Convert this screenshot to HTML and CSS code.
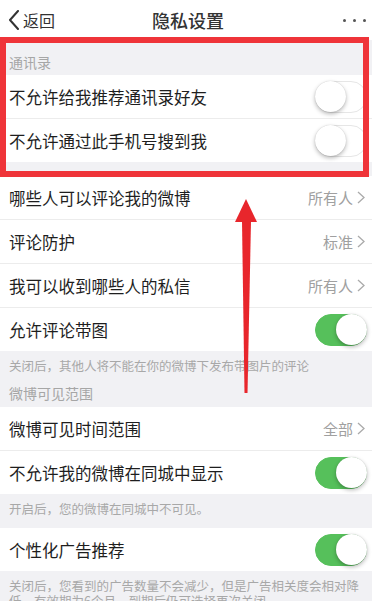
FILE: index.html
```html
<!DOCTYPE html>
<html lang="zh-CN">
<head>
<meta charset="utf-8">
<title>隐私设置</title>
<link rel="stylesheet" href="styles.css">
</head>
<body>
<div class="screen">
  <header class="nav">
    <div class="back">
      <svg class="back-icon" width="12" height="20" viewBox="0 0 12 20"><polyline points="10,1 2,10 10,19" fill="none" stroke="#333" stroke-width="2" stroke-linejoin="round" stroke-linecap="round"/></svg>
      <span>返回</span>
    </div>
    <div class="title">隐私设置</div>
    <div class="more"><i></i><i></i><i></i></div>
  </header>

  <div class="group-head">通讯录</div>
  <div class="list">
    <div class="row"><span class="label">不允许给我推荐通讯录好友</span><span class="switch"></span></div>
    <div class="row"><span class="label">不允许通过此手机号搜到我</span><span class="switch"></span></div>
  </div>
  <div class="gap"></div>
  <div class="list">
    <div class="row"><span class="label">哪些人可以评论我的微博</span><span class="value">所有人<svg class="chev" width="8" height="13" viewBox="0 0 8 13"><polyline points="1,1 7,6.5 1,12" fill="none" stroke="#aaa" stroke-width="1.3"/></svg></span></div>
    <div class="row"><span class="label">评论防护</span><span class="value">标准<svg class="chev" width="8" height="13" viewBox="0 0 8 13"><polyline points="1,1 7,6.5 1,12" fill="none" stroke="#aaa" stroke-width="1.3"/></svg></span></div>
    <div class="row"><span class="label">我可以收到哪些人的私信</span><span class="value">所有人<svg class="chev" width="8" height="13" viewBox="0 0 8 13"><polyline points="1,1 7,6.5 1,12" fill="none" stroke="#aaa" stroke-width="1.3"/></svg></span></div>
    <div class="row"><span class="label">允许评论带图</span><span class="switch on"></span></div>
  </div>
  <div class="note">关闭后，其他人将不能在你的微博下发布带图片的评论</div>
  <div class="group-head small">微博可见范围</div>
  <div class="list">
    <div class="row"><span class="label">微博可见时间范围</span><span class="value">全部<svg class="chev" width="8" height="13" viewBox="0 0 8 13"><polyline points="1,1 7,6.5 1,12" fill="none" stroke="#aaa" stroke-width="1.3"/></svg></span></div>
    <div class="row"><span class="label">不允许我的微博在同城中显示</span><span class="switch on"></span></div>
  </div>
  <div class="note tall">开启后，您的微博在同城中不可见。</div>
  <div class="list">
    <div class="row"><span class="label">个性化广告推荐</span><span class="switch on"></span></div>
  </div>
  <div class="note">关闭后，您看到的广告数量不会减少，但是广告相关度会相对降低，有效期为6个月，到期后仍可选择再次关闭。</div>

  <div class="annot-box"></div>
  <svg class="annot-arrow" width="372" height="601" viewBox="0 0 372 601">
    <polygon points="246,199 235,222 257,222" fill="#e8262c"/>
    <polygon points="242,221 251,221 247.5,393 244.5,393" fill="#e8262c"/>
  </svg>
</div>
</body>
</html>
```

FILE: styles.css
```css
* { box-sizing: border-box; margin: 0; padding: 0; }
html, body { width: 372px; height: 601px; overflow: hidden; }
body {
  background: #f1f1f4;
  font-family: "Noto Sans CJK SC", "Noto Sans", sans-serif;
  color: #222;
}
.screen { position: relative; width: 372px; height: 601px; overflow: hidden; }

.nav {
  height: 40px;
  background: #fff;
  display: flex;
  align-items: center;
  justify-content: space-between;
  padding: 0 4px 0 8px;
}
.back { display: flex; align-items: center; gap: 3px; font-size: 16px; color: #333; width: 80px; }
.back-icon { display: block; }
.title { font-size: 18px; font-weight: 500; color: #333; }
.more { width: 80px; display: flex; justify-content: flex-end; gap: 7px; padding-right: 2px; }
.more i { display: block; width: 3px; height: 3px; border-radius: 50%; background: #555; }

.group-head {
  height: 35px;
  padding: 15px 9px 0;
  font-size: 14px;
  line-height: 14px;
  color: #a6a6a6;
}
.group-head.small { height: 27px; padding-top: 6px; }

.list { background: #fff; }
.row {
  height: 44px;
  display: flex;
  align-items: center;
  justify-content: space-between;
  padding: 0 5px 0 9px;
  border-bottom: 1px solid #ececec;
}
.row:last-child { border-bottom: none; height: 43px; }
.label { font-size: 16.5px; line-height: 20px; color: #1e1e1e; }
.value { display: flex; align-items: center; gap: 4px; font-size: 15px; color: #a0a0a0; padding-right: 2px; }
.chev { display: block; }

.switch {
  position: relative;
  width: 52px;
  height: 32px;
  border-radius: 16px;
  background: #fff;
  border: 1.5px solid #e6e6e6;
  flex: none;
}
.switch::after {
  content: "";
  position: absolute;
  top: -1px;
  left: -1px;
  width: 31px;
  height: 31px;
  border-radius: 50%;
  background: #fff;
  box-shadow: 0 2px 4px rgba(0,0,0,0.28), 0 0 1px rgba(0,0,0,0.2);
}
.switch.on { background: #56c05b; border-color: #56c05b; }
.switch.on::after { left: auto; right: -1px; }

.gap { height: 14px; }

.note {
  padding: 7px 9px 7px;
  font-size: 12.5px;
  line-height: 15px;
  color: #a8a8a8;
}
.note.tall { padding-bottom: 12px; }

.annot-box {
  position: absolute;
  left: 0;
  top: 37px;
  width: 369px;
  height: 140px;
  border: 6px solid #ef3439;
}
.annot-arrow { position: absolute; left: 0; top: 0; }
```
